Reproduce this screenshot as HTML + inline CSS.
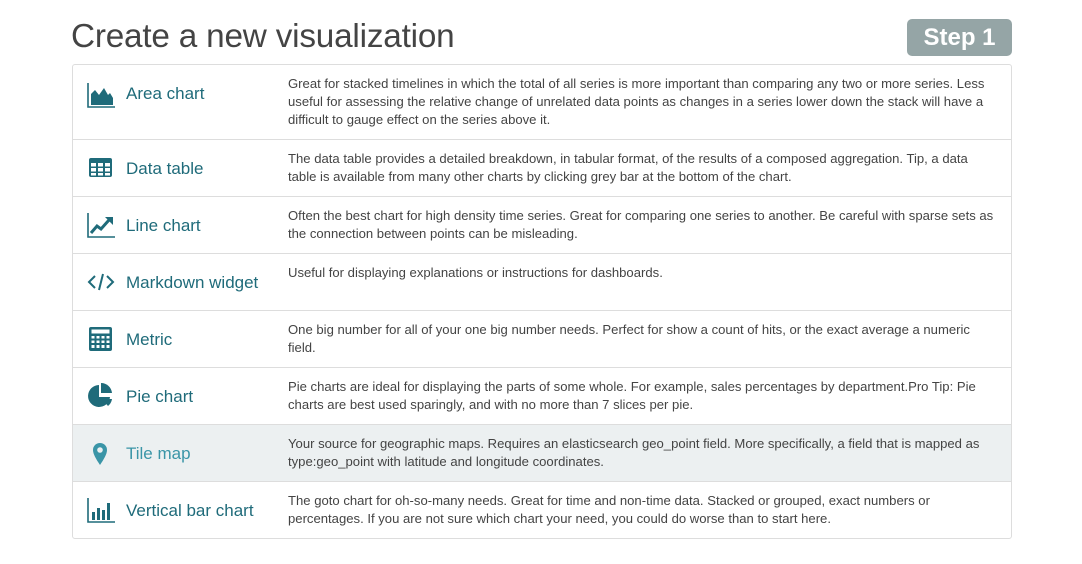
<!DOCTYPE html>
<html><head><meta charset="utf-8"><style>
*{margin:0;padding:0;box-sizing:border-box}
body{width:1082px;height:564px;background:#fff;font-family:"Liberation Sans",Arial,sans-serif;position:relative;overflow:hidden}
h1{position:absolute;left:71px;top:18px;font-size:33.3px;font-weight:normal;color:#444;letter-spacing:-0.2px}
.step{position:absolute;left:907px;top:19px;width:105px;height:37px;background:#95a5a6;border-radius:5px;color:#fff;font-weight:bold;font-size:24px;text-align:center;line-height:37px}
.tbl{position:absolute;left:72px;top:64px;width:940px;height:475px;border:1px solid #ddd;border-radius:3px;overflow:hidden}
.row{position:absolute;left:0;width:938px;border-top:1px solid #ddd}
.row.first{border-top:none}
.row.hl{background:#ecf0f1}
.ic{position:absolute;left:14px;width:28px;height:28px}
.lb{position:absolute;left:53px;font-size:17px;color:#1f6b7a}
.hl .lb{color:#3a95a7}
.ds{position:absolute;left:215px;top:10px;width:708px;font-size:13.1px;line-height:18px;color:#444}
</style></head><body>
<h1>Create a new visualization</h1>
<div class="step">Step 1</div>
<div class="tbl">
<div class="row first" style="top:0;height:74px">
<svg class="ic" style="top:16px" viewBox="0 0 28 28"><path d="M1 2V26H28" stroke="#1f6b7a" stroke-width="1.6" fill="none"/><path d="M4 24V13L8 9L12 14L17 7L21 14L23 12L26 17V24Z" fill="#1f6b7a"/></svg>
<div class="lb" style="top:19px">Area chart</div>
<div class="ds">Great for stacked timelines in which the total of all series is more important than comparing any two or more series. Less useful for assessing the relative change of unrelated data points as changes in a series lower down the stack will have a difficult to gauge effect on the series above it.</div></div>
<div class="row" style="top:74px;height:57px">
<svg class="ic" style="top:14px" viewBox="0 0 28 28"><rect x="2" y="4" width="23" height="19" rx="2" fill="#1f6b7a"/><g fill="#fff"><rect x="4" y="9" width="5" height="3.5"/><rect x="11" y="9" width="5" height="3.5"/><rect x="18" y="9" width="5" height="3.5"/><rect x="4" y="14" width="5" height="3.5"/><rect x="11" y="14" width="5" height="3.5"/><rect x="18" y="14" width="5" height="3.5"/><rect x="4" y="19" width="5" height="2.5"/><rect x="11" y="19" width="5" height="2.5"/><rect x="18" y="19" width="5" height="2.5"/></g></svg>
<div class="lb" style="top:19px">Data table</div>
<div class="ds">The data table provides a detailed breakdown, in tabular format, of the results of a composed aggregation. Tip, a data table is available from many other charts by clicking grey bar at the bottom of the chart.</div></div>
<div class="row" style="top:131px;height:57px">
<svg class="ic" style="top:14px" viewBox="0 0 28 28"><path d="M1 2V26H28" stroke="#1f6b7a" stroke-width="1.6" fill="none"/><path d="M4 22L10 15L14 18L22 9" stroke="#1f6b7a" stroke-width="3" fill="none"/><path d="M18 6H26V14Z" fill="#1f6b7a"/></svg>
<div class="lb" style="top:19px">Line chart</div>
<div class="ds">Often the best chart for high density time series. Great for comparing one series to another. Be careful with sparse sets as the connection between points can be misleading.</div></div>
<div class="row" style="top:188px;height:57px">
<svg class="ic" style="top:14px" viewBox="0 0 28 28"><path d="M8 8L2 14L8 20M20 8L26 14L20 20M16 6L12 22" stroke="#1f6b7a" stroke-width="2" fill="none"/></svg>
<div class="lb" style="top:19px">Markdown widget</div>
<div class="ds">Useful for displaying explanations or instructions for dashboards.</div></div>
<div class="row" style="top:245px;height:57px">
<svg class="ic" style="top:14px" viewBox="0 0 28 28"><rect x="2" y="2" width="23" height="24" rx="2" fill="#1f6b7a"/><rect x="4.5" y="4.5" width="18" height="4" fill="#fff"/><g fill="#fff"><rect x="4.5" y="11" width="3" height="2.5"/><rect x="9.5" y="11" width="3" height="2.5"/><rect x="14.5" y="11" width="3" height="2.5"/><rect x="19.5" y="11" width="3" height="2.5"/><rect x="4.5" y="15.5" width="3" height="2.5"/><rect x="9.5" y="15.5" width="3" height="2.5"/><rect x="14.5" y="15.5" width="3" height="2.5"/><rect x="19.5" y="15.5" width="3" height="2.5"/><rect x="4.5" y="20" width="3" height="3"/><rect x="9.5" y="20" width="3" height="3"/><rect x="14.5" y="20" width="3" height="3"/><rect x="19.5" y="20" width="3" height="3"/></g></svg>
<div class="lb" style="top:19px">Metric</div>
<div class="ds">One big number for all of your one big number needs. Perfect for show a count of hits, or the exact average a numeric field.</div></div>
<div class="row" style="top:302px;height:57px">
<svg class="ic" style="top:14px" viewBox="0 0 28 28"><path d="M12 3A11 11 0 1 0 23 15H12Z" fill="#1f6b7a"/><path d="M14 1A11 11 0 0 1 25 11H14Z" fill="#1f6b7a"/><path d="M15 17H25A11 11 0 0 1 21 24Z" fill="#1f6b7a"/></svg>
<div class="lb" style="top:19px">Pie chart</div>
<div class="ds">Pie charts are ideal for displaying the parts of some whole. For example, sales percentages by department.Pro Tip: Pie charts are best used sparingly, and with no more than 7 slices per pie.</div></div>
<div class="row hl" style="top:359px;height:57px">
<svg class="ic" style="top:14px" viewBox="0 0 28 28"><path d="M13 26C9 20 6 15 6 11A7 7 0 0 1 20 11C20 15 17 20 13 26Z" fill="#3a95a7"/><circle cx="13" cy="11" r="2.8" fill="#ecf0f1"/></svg>
<div class="lb" style="top:19px">Tile map</div>
<div class="ds">Your source for geographic maps. Requires an elasticsearch geo_point field. More specifically, a field that is mapped as type:geo_point with latitude and longitude coordinates.</div></div>
<div class="row" style="top:416px;height:59px">
<svg class="ic" style="top:14px" viewBox="0 0 28 28"><path d="M1 2V26H28" stroke="#1f6b7a" stroke-width="1.6" fill="none"/><g fill="#1f6b7a"><rect x="5" y="16" width="3" height="8"/><rect x="10" y="12" width="3" height="12"/><rect x="15" y="14" width="3" height="10"/><rect x="20" y="7" width="3" height="17"/></g></svg>
<div class="lb" style="top:19px">Vertical bar chart</div>
<div class="ds">The goto chart for oh-so-many needs. Great for time and non-time data. Stacked or grouped, exact numbers or percentages. If you are not sure which chart your need, you could do worse than to start here.</div></div>
</div>
</body></html>
